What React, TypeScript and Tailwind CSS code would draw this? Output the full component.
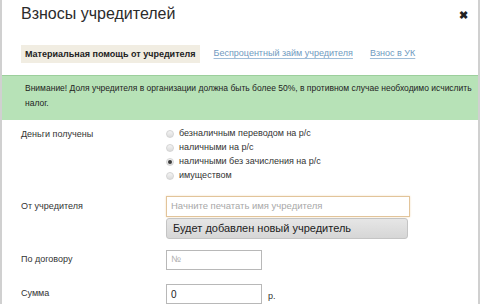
import React from "react";

const radios = [
  { label: "безналичным переводом на р/с", checked: false },
  { label: "наличными на р/с", checked: false },
  { label: "наличными без зачисления на р/с", checked: true },
  { label: "имуществом", checked: false },
];

const Radio: React.FC<{ checked: boolean }> = ({ checked }) => (
  <span className="w-[8px] h-[8px] rounded-full border border-[#d4d4d4] bg-gradient-to-b from-[#f4f4f4] to-[#dcdcdc] flex items-center justify-center shrink-0">
    {checked && <span className="w-[4px] h-[4px] rounded-full bg-[#3a3a3a]" />}
  </span>
);

const App: React.FC = () => {
  return (
    <div className="w-[480px] h-[304px] overflow-hidden bg-white border-x-2 border-[#d0d0d0] text-[#333] font-['Liberation_Sans',Arial,sans-serif]">
      {/* Header */}
      <div className="flex items-start justify-between pl-[19px] pr-[10px] pt-[2px] h-[44px]">
        <h1 className="text-[16px] leading-[24px] font-normal text-[#2b2b2b]">
          Взносы учредителей
        </h1>
        <span className="text-[11px] font-bold leading-[24px] mt-[1px] text-[#222]">✖</span>
      </div>

      {/* Tabs */}
      <div className="flex items-center pl-[19px] h-[20px] text-[9px]">
        <span className="bg-[#f1ede2] px-[4px] h-[18px] leading-[18px] font-bold text-[#222]">
          Материальная помощь от учредителя
        </span>
        <a className="ml-[14px] text-[#6f9ac0] underline decoration-[#9fbdd8] underline-offset-2">
          Беспроцентный займ учредителя
        </a>
        <a className="ml-[17px] text-[#6f9ac0] underline decoration-[#9fbdd8] underline-offset-2">
          Взнос в УК
        </a>
      </div>

      {/* Warning */}
      <div className="mt-[11px] border-t border-[#9ccf9c] bg-[#b7e2b7] pl-[23px] pt-[5px] pb-[9px] text-[8.5px] leading-[15px] text-[#222] whitespace-nowrap">
        Внимание! Доля учредителя в организации должна быть более 50%, в противном случае необходимо исчислить
        <br />
        налог.
      </div>

      {/* Form */}
      <div className="pl-[19px] pt-[7px] text-[9px] text-[#333]">
        <div className="flex">
          <div className="w-[145px] leading-[14px]">Деньги получены</div>
          <div className="flex flex-col">
            {radios.map((r) => (
              <label key={r.label} className="flex items-center gap-[5px] h-[14px]">
                <Radio checked={r.checked} />
                <span>{r.label}</span>
              </label>
            ))}
          </div>
        </div>

        <div className="flex mt-[13px]">
          <div className="w-[145px] pt-[4px]">От учредителя</div>
          <div className="flex flex-col w-[244px]">
            <div className="h-[21px] border border-[#e2c49a] bg-white shadow-[0_0_2px_#f3dfc0] flex items-center px-[4px] text-[9.5px] text-[#a8a8a8]">
              Начните печатать имя учредителя
            </div>
            <div className="mt-[1px] mr-[2px] h-[21px] rounded-[3px] border border-[#c4c4c4] bg-gradient-to-b from-[#e6e6e6] to-[#d6d6d6] flex items-center px-[6px] text-[11px] text-[#222]">
              Будет добавлен новый учредитель
            </div>
          </div>
        </div>

        <div className="flex mt-[11px] items-center">
          <div className="w-[145px]">По договору</div>
          <div className="w-[96px] h-[20px] border border-[#b8b8b8] flex items-center px-[4px] text-[#b0b0b0]">
            №
          </div>
        </div>

        <div className="flex mt-[14px] items-center">
          <div className="w-[145px]">Сумма</div>
          <div className="w-[96px] h-[20px] border border-[#b8b8b8] flex items-center px-[4px] text-[10px] text-[#222]">
            0
          </div>
          <span className="ml-[6px] mt-[6px]">р.</span>
        </div>
      </div>
    </div>
  );
};

export default App;
